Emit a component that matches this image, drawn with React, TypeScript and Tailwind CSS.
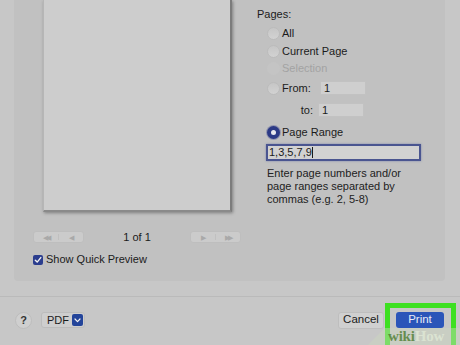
import React from 'react';

const Radio = ({ checked, disabled }: { checked?: boolean; disabled?: boolean }) => {
  if (checked) {
    return (
      <span className="w-[13px] h-[13px] rounded-full bg-[#2c3a86] flex items-center justify-center shrink-0 shadow-[0_0_0_1px_rgba(60,70,140,0.35)]">
        <span className="w-[5px] h-[5px] rounded-full bg-[#e8e8ee]" />
      </span>
    );
  }
  return (
    <span
      className={
        disabled
          ? 'w-[13px] h-[13px] rounded-full bg-[#c4c4c4] shrink-0'
          : 'w-[13px] h-[13px] rounded-full bg-gradient-to-b from-[#c6c6c6] to-[#d2d2d2] border border-[#bcbcbc] shrink-0'
      }
    />
  );
};

const PagerGroup = ({ dir }: { dir: 'left' | 'right' }) => (
  <div className="w-[51px] h-[12px] rounded-[3px] bg-[#cbcbcb] border border-[#bebebe] flex items-center text-[#a9a9a9] text-[7px] leading-none">
    {dir === 'left' ? (
      <>
        <span className="flex-1 text-center tracking-[-2px]">◀◀</span>
        <span className="w-px h-[6px] bg-[#c0c0c0]" />
        <span className="flex-1 text-center">◀</span>
      </>
    ) : (
      <>
        <span className="flex-1 text-center">▶</span>
        <span className="w-px h-[6px] bg-[#c0c0c0]" />
        <span className="flex-1 text-center tracking-[-2px]">▶▶</span>
      </>
    )}
  </div>
);

export default function App() {
  return (
    <div
      className="relative w-[460px] h-[345px] overflow-hidden bg-[#c7c7c7] text-[#1b1b1b] text-[11px] flex flex-col"
      style={{ fontFamily: '"Liberation Sans", Arial, sans-serif' }}
    >
      {/* main panel */}
      <div className="h-[297px] pl-[14px] pr-[15px] border-b border-[#bababa]">
        <div className="h-[281px] bg-[#c1c1c1] rounded-b-[4px] flex">
          {/* preview column */}
          <div className="w-[229px] pl-[19px] flex flex-col">
            <div className="ml-[10px] w-[189px] h-[212px] bg-[#cdcdcd] border-l border-[#b6b6b6] border-r-[2px] border-r-[#7c7c7c] border-b-[2px] border-b-[#8a8a8a] shadow-[1px_1px_3px_rgba(0,0,0,0.35)]" />
            <div className="mt-[19px] flex items-center justify-between w-[208px]">
              <PagerGroup dir="left" />
              <span className="text-[11px] leading-none">1 of 1</span>
              <PagerGroup dir="right" />
            </div>
            <div className="mt-[11px] flex items-center gap-[3px]">
              <span className="w-[10px] h-[10px] rounded-[2px] bg-[#2b3d8e] flex items-center justify-center">
                <svg width="8" height="8" viewBox="0 0 8 8" fill="none">
                  <path d="M1.3 4.2 L3.2 6.1 L6.8 1.6" stroke="#f2f2f2" strokeWidth="1.4" strokeLinecap="round" strokeLinejoin="round" />
                </svg>
              </span>
              <span className="leading-none">Show Quick Preview</span>
            </div>
          </div>

          {/* options column */}
          <div className="flex-1 pl-[14px] pt-[8px] flex flex-col">
            <div className="h-[12px] leading-[12px]">Pages:</div>
            <div className="pl-[10px] mt-[4px] flex flex-col">
              <div className="h-[18px] flex items-center gap-[2px]">
                <Radio />
                <span>All</span>
              </div>
              <div className="h-[18px] flex items-center gap-[2px]">
                <Radio />
                <span>Current Page</span>
              </div>
              <div className="h-[17px] flex items-center gap-[2px]">
                <Radio disabled />
                <span className="text-[#a3a3a3]">Selection</span>
              </div>
              <div className="h-[22px] flex items-center gap-[2px]">
                <Radio />
                <span className="w-[36px]">From:</span>
                <span className="w-[46px] h-[14px] bg-[#cfcfcf] border border-[#c2c2c2] pl-[3px] leading-[12px]">1</span>
              </div>
              <div className="h-[22px] flex items-center">
                <span className="w-[51px] text-right pr-[5px]">to:</span>
                <span className="w-[46px] h-[14px] bg-[#cfcfcf] border border-[#c2c2c2] pl-[3px] leading-[12px]">1</span>
              </div>
              <div className="h-[22px] flex items-center gap-[2px]">
                <Radio checked />
                <span>Page Range</span>
              </div>
            </div>
            <div className="ml-[9px] mt-[1px] w-[155px] h-[17px] border-2 border-[#4a5590] bg-[#d2d2d2] shadow-[0_0_2px_rgba(60,80,160,0.5)] flex items-center pl-[1px]">
              <span className="leading-none">1,3,5,7,9</span>
              <span className="w-px h-[11px] bg-[#1b1b1b]" />
            </div>
            <div className="ml-[10px] mt-[6px] leading-[13px] text-[#222]">
              Enter page numbers and/or
              <br />
              page ranges separated by
              <br />
              commas (e.g. 2, 5-8)
            </div>
          </div>
        </div>
      </div>

      {/* bottom bar */}
      <div className="flex-1 flex items-center pl-[15px] pr-[16px] pb-[2px]">
        <span className="w-[17px] h-[17px] rounded-full bg-[#cfcfcf] border border-[#bdbdbd] flex items-center justify-center text-[11px] font-bold text-[#333]">
          ?
        </span>
        <div className="ml-[9px] h-[16px] w-[44px] rounded-[3px] bg-[#cecece] border border-[#bcbcbc] flex items-center pl-[5px] pr-[1px] justify-between">
          <span className="text-[11px] leading-none">PDF</span>
          <span className="w-[11px] h-[12px] rounded-[2px] bg-[#23449a] flex items-center justify-center">
            <svg width="7" height="5" viewBox="0 0 7 5" fill="none">
              <path d="M1 1 L3.5 3.6 L6 1" stroke="#f4f4f4" strokeWidth="1.2" strokeLinecap="round" strokeLinejoin="round" />
            </svg>
          </span>
        </div>
        <div className="ml-auto h-[17px] w-[46px] rounded-[3px] bg-[#d0d0d0] border border-[#bebebe] flex items-center justify-center text-[11.5px]">
          Cancel
        </div>
        <div className="ml-[12px] h-[16px] w-[48px] rounded-[3px] bg-[#2b55b9] flex items-center justify-center text-[11.5px] text-[#e9ecf6]">
          Print
        </div>
      </div>

      {/* highlight box */}
      <div className="absolute left-[385px] top-[303px] w-[71px] h-[50px] border-[5px] border-[#3de021]" />

      {/* watermark */}
      <div className="absolute left-[365px] top-[328px] w-[110px] h-[20px] bg-[rgba(205,215,190,0.45)] [clip-path:polygon(18%_0,100%_0,100%_100%,0_100%)]" />
      <div
        className="absolute left-[388px] top-[329px] text-[15px] font-bold leading-none tracking-[-0.2px]"
        style={{ fontFamily: '"Liberation Serif", "DejaVu Serif", serif' }}
      >
        <span className="text-[rgba(70,120,40,0.75)]">wiki</span>
        <span className="text-[rgba(225,235,215,0.75)]">How</span>
      </div>
    </div>
  );
}
